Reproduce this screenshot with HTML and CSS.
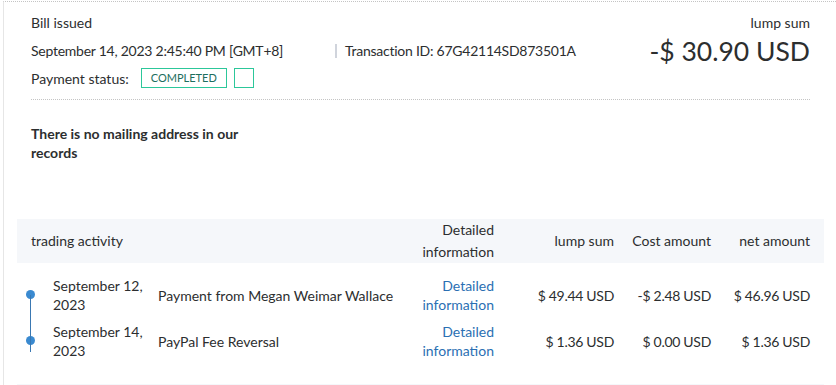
FILE: index.html
```html
<!DOCTYPE html>
<html lang="en">
<head>
    <meta charset="UTF-8">
    <meta name="viewport" content="width=device-width, initial-scale=1.0">
    <title>Transaction details</title>
    <link rel="stylesheet" href="styles.css">
</head>
<body>
    <div class="card">
        <div class="summary">
            <div class="summary-left">
                <div class="label">Bill issued</div>
                <div class="meta-row">
                    <span class="date">September 14, 2023 2:45:40 PM [GMT+8]</span>
                    <span class="txn">Transaction ID: 67G42114SD873501A</span>
                </div>
                <div class="status-row">
                    <span>Payment status:</span>
                    <span class="badge">COMPLETED</span>
                    <span class="badge badge-empty"></span>
                </div>
            </div>
            <div class="summary-right">
                <div class="label">lump sum</div>
                <div class="total">-$ 30.90 USD</div>
            </div>
        </div>

        <div class="address">There is no mailing address in our records</div>

        <div class="activity">
            <div class="activity-head">
                <div class="col-title">trading activity</div>
                <div class="num">Detailed information</div>
                <div class="num">lump sum</div>
                <div class="num">Cost amount</div>
                <div class="num">net amount</div>
            </div>
            <div class="activity-body">
                <div class="activity-row first">
                    <div class="timeline"></div>
                    <div>September 12, 2023</div>
                    <div class="desc">Payment from Megan Weimar Wallace</div>
                    <div class="num"><a href="#">Detailed information</a></div>
                    <div class="num amount">$ 49.44 USD</div>
                    <div class="num amount">-$ 2.48 USD</div>
                    <div class="num amount">$ 46.96 USD</div>
                </div>
                <div class="activity-row last">
                    <div class="timeline"></div>
                    <div>September 14, 2023</div>
                    <div class="desc">PayPal Fee Reversal</div>
                    <div class="num"><a href="#">Detailed information</a></div>
                    <div class="num amount">$ 1.36 USD</div>
                    <div class="num amount">$ 0.00 USD</div>
                    <div class="num amount">$ 1.36 USD</div>
                </div>
            </div>
            <div class="activity-foot"></div>
        </div>
    </div>
</body>
</html>
```

FILE: styles.css
```css
body {
    margin: 0;
    font-family: 'Lato', 'Noto Sans', sans-serif;
    font-size: 14px;
    color: #2c2e2f;
    background-color: #fff;
    overflow: hidden;
}

.card {
    margin: 1px 0 0 3px;
    border-top: 1px dotted #c4c4c4;
    border-left: 1px solid #e6e6e6;
    padding: 0 12px 0 13px;
    height: 400px;
}

.summary {
    display: flex;
    justify-content: space-between;
    margin: 0 14px;
    padding-top: 11px;
    padding-bottom: 11px;
    border-bottom: 1px dotted #c4c4c4;
}

.label {
    line-height: 20px;
}

.meta-row {
    display: flex;
    align-items: center;
    margin-top: 8px;
    line-height: 20px;
    letter-spacing: -0.25px;
}

.date {
    width: 304px;
}

.txn {
    border-left: 2px solid #d0d4dc;
    padding-left: 8px;
    line-height: 14px;
}

.status-row {
    display: flex;
    align-items: center;
    gap: 7px;
    margin-top: 7px;
    height: 20px;
}

.status-row span:first-child {
    margin-right: 5px;
}

.badge {
    box-sizing: border-box;
    height: 20px;
    padding: 0 9px;
    border: 1px solid #2cc79a;
    color: #1d6e5e;
    font-size: 11px;
    line-height: 18px;
}

.badge-empty {
    width: 20px;
    padding: 0;
}

.summary-right {
    text-align: right;
}

.total {
    font-size: 26.5px;
    line-height: 32px;
    margin-top: 2px;
}

.address {
    margin: 24px 14px 0;
    width: 240px;
    font-weight: 700;
    line-height: 19px;
}

.activity {
    margin-top: 57px;
}

.activity-head,
.activity-row {
    display: grid;
    grid-template-columns: 36px 105px 1fr 90px 120px 97px 99px;
    padding-right: 14px;
}

.activity-head {
    background-color: #f5f7fa;
    line-height: 22px;
    align-items: center;
}

.col-title {
    grid-column: span 3;
    padding-left: 14px;
}

.num {
    text-align: right;
}

.amount {
    letter-spacing: -0.3px;
}

.activity-body {
    padding: 9px 0 20px;
}

.activity-row {
    padding-top: 4px;
    padding-bottom: 4px;
    line-height: 19px;
    align-items: center;
}

.activity-row a {
    color: #2a6fb3;
    text-decoration: none;
}

.timeline {
    position: relative;
    align-self: stretch;
}

.timeline::before {
    content: '';
    position: absolute;
    left: 9px;
    top: 50%;
    width: 9px;
    height: 9px;
    margin-top: -5px;
    border-radius: 50%;
    background-color: #3a8ad0;
}

.timeline::after {
    content: '';
    position: absolute;
    left: 13px;
    width: 1px;
    background-color: #3a78b2;
}

.first .timeline::after {
    top: 50%;
    bottom: -4px;
}

.last .timeline::after {
    top: -4px;
    height: calc(50% + 15px);
}

.activity-foot {
    height: 20px;
    background-color: #f5f7fa;
}
```
